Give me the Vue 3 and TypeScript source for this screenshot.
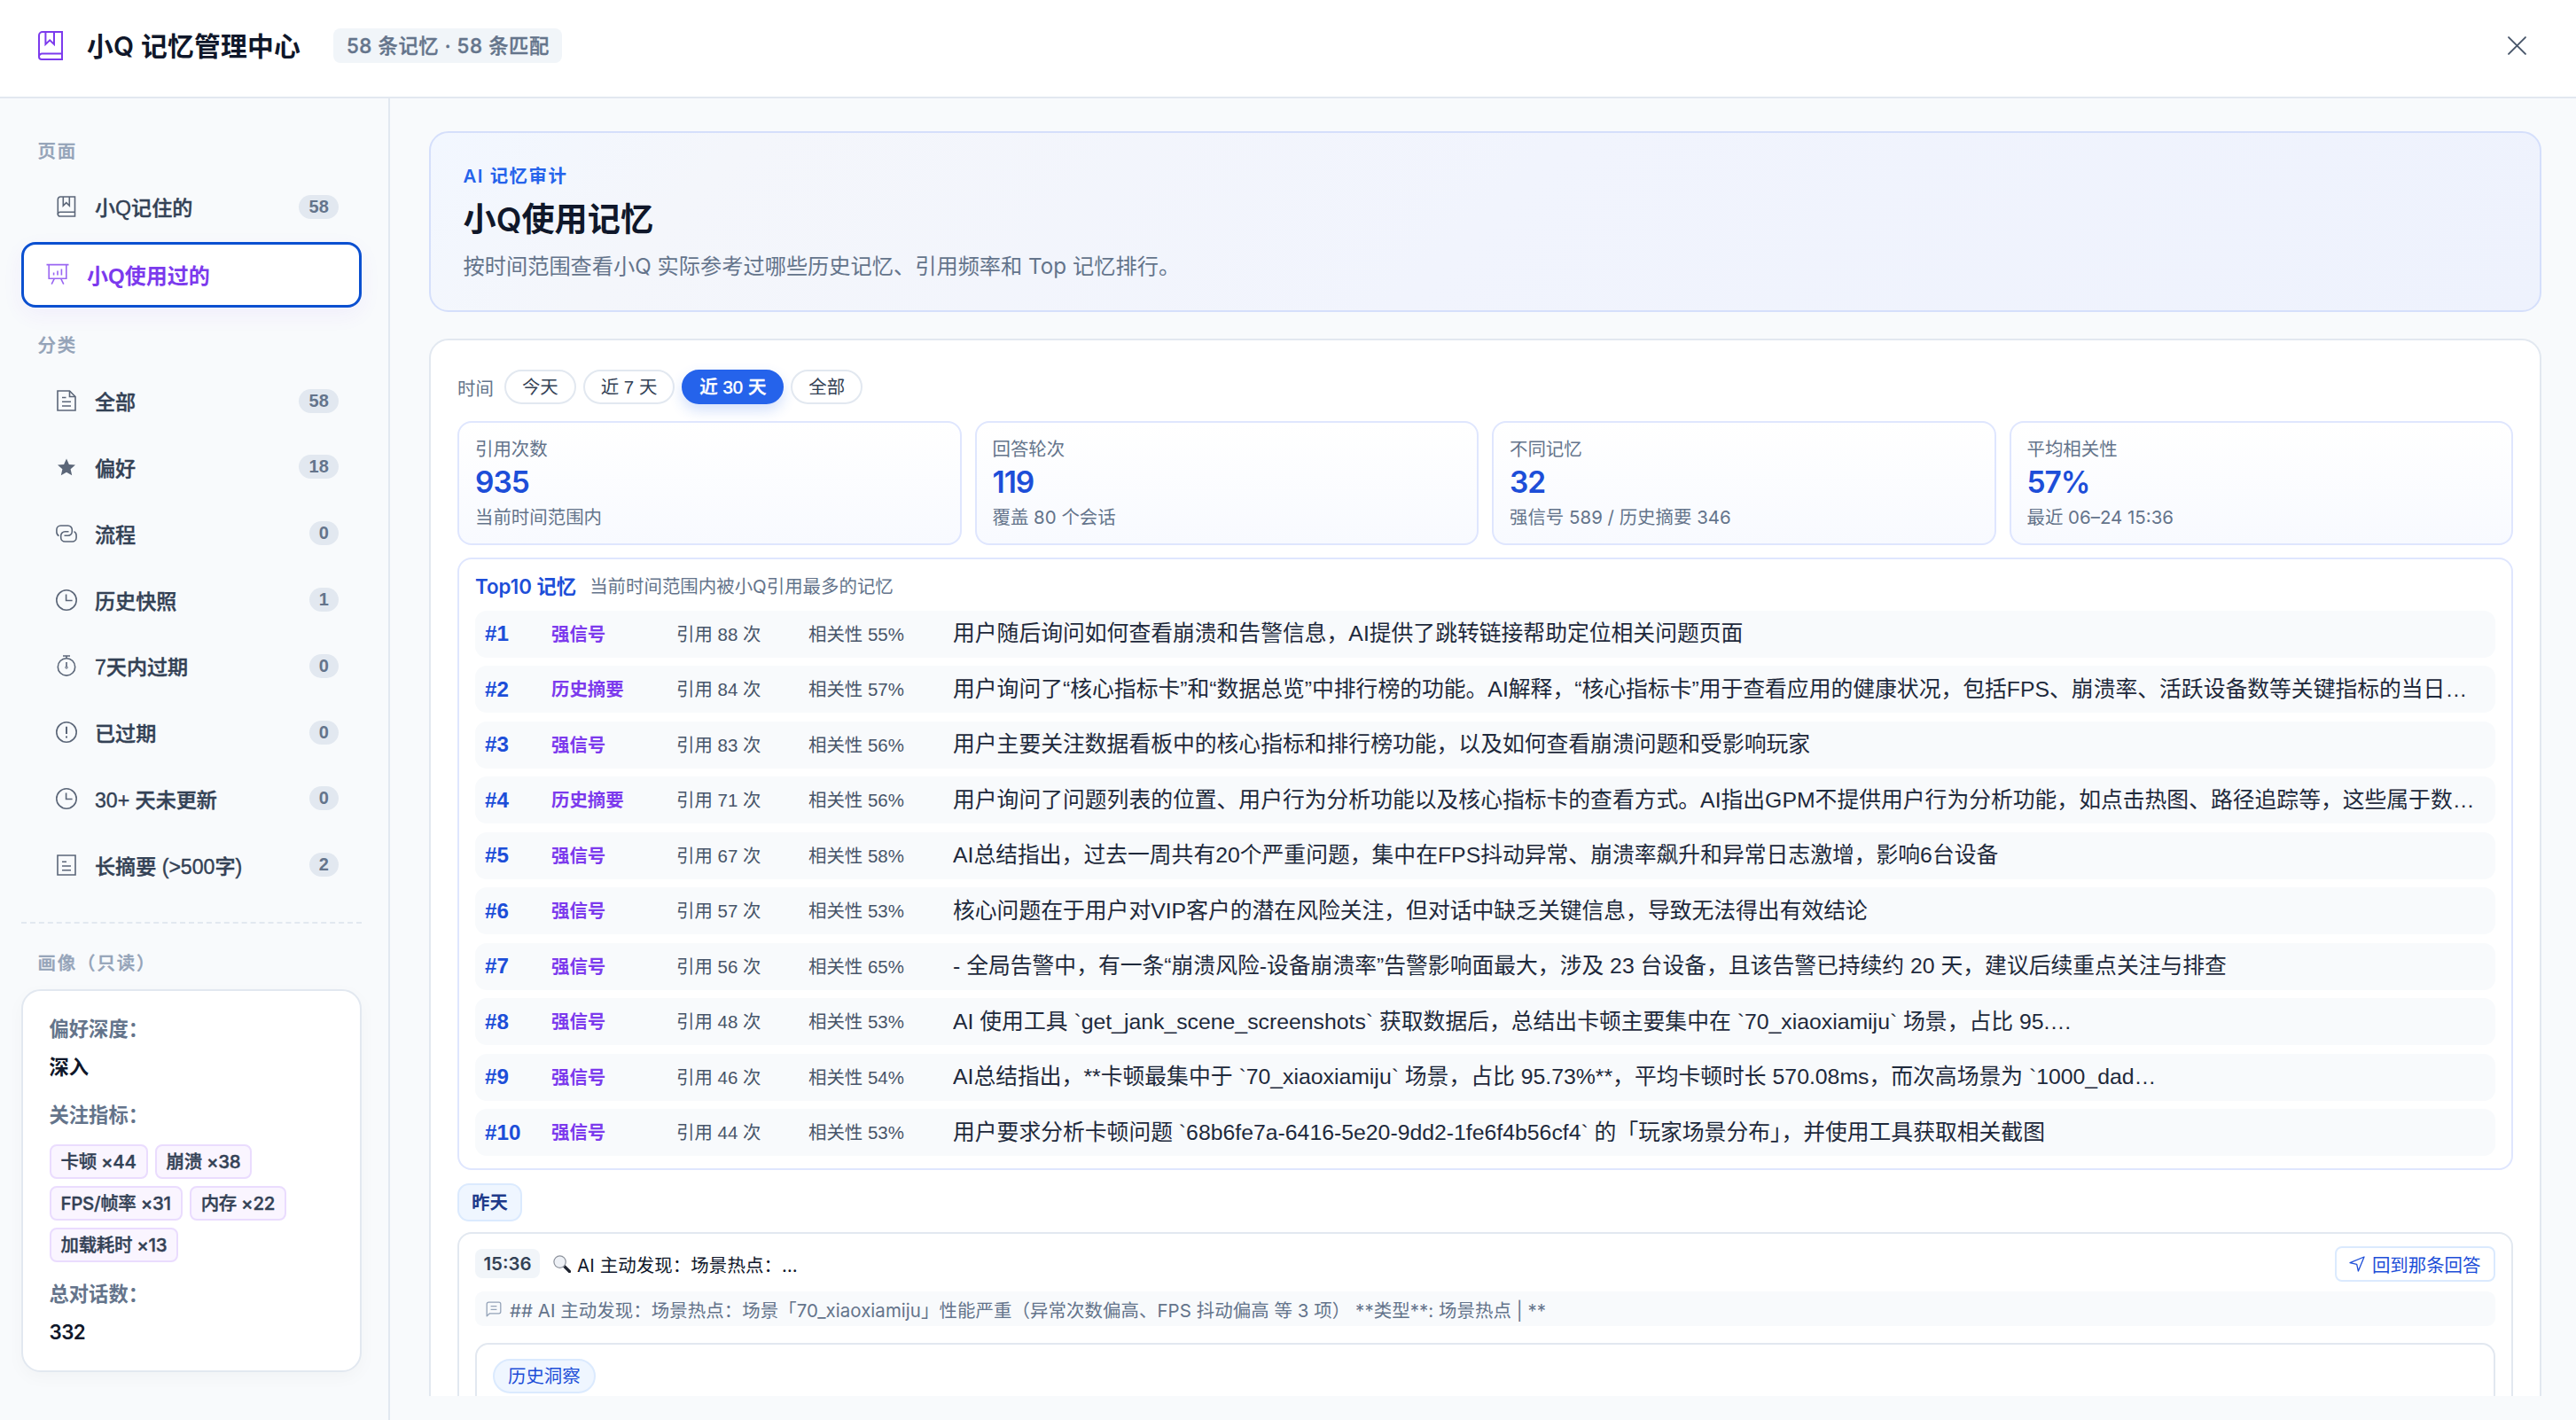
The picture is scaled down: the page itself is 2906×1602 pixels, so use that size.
<script setup lang="ts">
interface NavItem {
  icon: string
  label: string
  count: number
}

interface Stat {
  label: string
  value: string
  note: string
}

interface RankRow {
  kind: string
  cites: number
  relevance: number
  text: string
}

const categories: NavItem[] = [
  { icon: 'doc', label: '全部', count: 58 },
  { icon: 'star', label: '偏好', count: 18 },
  { icon: 'link', label: '流程', count: 0 },
  { icon: 'clock', label: '历史快照', count: 1 },
  { icon: 'timer', label: '7天内过期', count: 0 },
  { icon: 'alert', label: '已过期', count: 0 },
  { icon: 'clock', label: '30+ 天未更新', count: 0 },
  { icon: 'note', label: '长摘要 (>500字)', count: 2 },
]

const tags: string[] = ['卡顿 ×44', '崩溃 ×38', 'FPS/帧率 ×31', '内存 ×22', '加载耗时 ×13']

const ranges: string[] = ['今天', '近 7 天', '近 30 天', '全部']
const activeRange = '近 30 天'

const stats: Stat[] = [
  { label: '引用次数', value: '935', note: '当前时间范围内' },
  { label: '回答轮次', value: '119', note: '覆盖 80 个会话' },
  { label: '不同记忆', value: '32', note: '强信号 589 / 历史摘要 346' },
  { label: '平均相关性', value: '57%', note: '最近 06–24 15:36' },
]

const rows: RankRow[] = [
  { kind: '强信号', cites: 88, relevance: 55, text: '用户随后询问如何查看崩溃和告警信息，AI提供了跳转链接帮助定位相关问题页面' },
  { kind: '历史摘要', cites: 84, relevance: 57, text: '用户询问了“核心指标卡”和“数据总览”中排行榜的功能。AI解释，“核心指标卡”用于查看应用的健康状况，包括FPS、崩溃率、活跃设备数等关键指标的当日…' },
  { kind: '强信号', cites: 83, relevance: 56, text: '用户主要关注数据看板中的核心指标和排行榜功能，以及如何查看崩溃问题和受影响玩家' },
  { kind: '历史摘要', cites: 71, relevance: 56, text: '用户询问了问题列表的位置、用户行为分析功能以及核心指标卡的查看方式。AI指出GPM不提供用户行为分析功能，如点击热图、路径追踪等，这些属于数…' },
  { kind: '强信号', cites: 67, relevance: 58, text: 'AI总结指出，过去一周共有20个严重问题，集中在FPS抖动异常、崩溃率飙升和异常日志激增，影响6台设备' },
  { kind: '强信号', cites: 57, relevance: 53, text: '核心问题在于用户对VIP客户的潜在风险关注，但对话中缺乏关键信息，导致无法得出有效结论' },
  { kind: '强信号', cites: 56, relevance: 65, text: '- 全局告警中，有一条“崩溃风险-设备崩溃率”告警影响面最大，涉及 23 台设备，且该告警已持续约 20 天，建议后续重点关注与排查' },
  { kind: '强信号', cites: 48, relevance: 53, text: 'AI 使用工具 `get_jank_scene_screenshots` 获取数据后，总结出卡顿主要集中在 `70_xiaoxiamiju` 场景，占比 95.…' },
  { kind: '强信号', cites: 46, relevance: 54, text: 'AI总结指出，**卡顿最集中于 `70_xiaoxiamiju` 场景，占比 95.73%**，平均卡顿时长 570.08ms，而次高场景为 `1000_dad…' },
  { kind: '强信号', cites: 44, relevance: 53, text: '用户要求分析卡顿问题 `68b6fe7a-6416-5e20-9dd2-1fe6f4b56cf4` 的「玩家场景分布」，并使用工具获取相关截图' },
]
</script>

<template>
  <div class="app">
    <header class="topbar">
      <svg class="logo" viewBox="0 0 28 33" fill="none" stroke="#7c3aed" stroke-width="2">
        <path d="M27 1H5a4 4 0 0 0-4 4v24a3 3 0 0 0 3 3h23V1z" />
        <path d="M1 29a3.4 3.4 0 0 1 3.4-3.4H27" />
        <path d="M8.4 1v14l4.8-4.6 4.8 4.6V1" />
      </svg>
      <h1 class="title">小Q 记忆管理中心</h1>
      <span class="summary">58 条记忆 · 58 条匹配</span>
      <button class="close" aria-label="关闭">
        <svg viewBox="0 0 20 20" fill="none" stroke="#475569" stroke-width="1.8" stroke-linecap="round">
          <path d="M1 1l18 18M19 1L1 19" />
        </svg>
      </button>
    </header>

    <div class="body">
      <aside class="sidebar">
        <div class="group">页面</div>
        <button class="nav first">
          <svg class="ico" viewBox="0 0 24 24" fill="none" stroke="currentColor" stroke-width="1.6">
            <path d="M21.5 1H5.2a2.9 2.9 0 0 0-2.9 2.9v16.800a2.300 2.300 0 0 0 2.300 2.300h16.900V1z" />
            <path d="M2.300 20.700a2.400 2.400 0 0 1 2.400-2.400h16.800" />
            <path d="M8.300 1v10l3.500-3.400 3.500 3.400V1" />
          </svg>
          <span class="nav-label">小Q记住的</span>
          <span class="count">58</span>
        </button>
        <button class="nav active">
          <svg class="ico" viewBox="0 0 26 24" fill="none" stroke="currentColor" stroke-width="1.6">
            <path d="M0.500 1.600h25M3.200 1.600v15.600h19.600V1.600M9.400 17.200L6.200 23.600M16.600 17.200l3.200 6.400" />
            <path d="M8.600 10.600v3M13 8.600v5M17.400 6.400v7.200" />
          </svg>
          <span class="nav-label">小Q使用过的</span>
        </button>

        <div class="group second">分类</div>
        <div class="nav-list">
          <button v-for="item in categories" :key="item.label" class="nav">
            <svg class="ico" viewBox="0 0 24 24" fill="none" stroke="currentColor" stroke-width="1.6">
              <template v-if="item.icon === 'doc'">
                <path d="M2 1h13.500L22 7.500V23H2z" />
                <path d="M15.500 1v6.500H22M7 8.500h4.500M7 13.300h10M7 18h10" />
              </template>
              <path
                v-else-if="item.icon === 'star'"
                fill="currentColor"
                stroke="none"
                d="M12 2.400l2.900 6.500 7.100.7-5.400 4.700 1.600 7L12 17.700l-6.200 3.600 1.600-7L2 9.600l7.100-.7z"
              />
              <template v-else-if="item.icon === 'link'">
                <path d="M3.500 14.600A5 5 0 0 1 .9 10.200V7.600a4.600 4.600 0 0 1 4.600-4.600h8.200a4.600 4.600 0 0 1 4.600 4.600v2a4.600 4.600 0 0 1-4.600 4.600H9.500" />
                <path d="M20.500 9.600a5 5 0 0 1 2.600 4.400v2.400a4.600 4.600 0 0 1-4.600 4.600h-8.200a4.600 4.600 0 0 1-4.600-4.600v-2a4.600 4.600 0 0 1 4.600-4.600h4.200" />
              </template>
              <template v-else-if="item.icon === 'clock'">
                <circle cx="12" cy="12" r="11.200" />
                <path d="M11.600 5.500v7h7" />
              </template>
              <template v-else-if="item.icon === 'timer'">
                <circle cx="12" cy="13.400" r="9.700" />
                <path d="M8 1h8M12 1v2.700M12 8v5" />
                <circle cx="12" cy="14" r="1.200" stroke-width="1" />
              </template>
              <template v-else-if="item.icon === 'alert'">
                <circle cx="12" cy="12" r="11.200" />
                <path d="M12 5.800v8.200M12 16.400v2" stroke-width="2" />
              </template>
              <template v-else>
                <path d="M2 1h20v22H2z" />
                <path d="M7 8.300h5M7 13h10M7 17.700h10" />
              </template>
            </svg>
            <span class="nav-label">{{ item.label }}</span>
            <span class="count">{{ item.count }}</span>
          </button>
        </div>

        <div class="divider"></div>
        <div class="group third">画像（只读）</div>
        <section class="profile">
          <div class="p-key">偏好深度：</div>
          <div class="p-val">深入</div>
          <div class="p-key k2">关注指标：</div>
          <div class="tags">
            <span v-for="t in tags" :key="t" class="tag">{{ t }}</span>
          </div>
          <div class="p-key k3">总对话数：</div>
          <div class="p-val num">332</div>
        </section>
      </aside>

      <main class="main">
        <section class="hero">
          <div class="eyebrow">AI 记忆审计</div>
          <h2>小Q使用记忆</h2>
          <p>按时间范围查看小Q 实际参考过哪些历史记忆、引用频率和 Top 记忆排行。</p>
        </section>

        <section class="panel">
          <div class="filters">
            <span class="f-label">时间</span>
            <button v-for="r in ranges" :key="r" class="pill" :class="{ on: r === activeRange }">{{ r }}</button>
          </div>

          <div class="stats">
            <div v-for="s in stats" :key="s.label" class="stat">
              <div class="s-label">{{ s.label }}</div>
              <div class="s-value">{{ s.value }}</div>
              <div class="s-note">{{ s.note }}</div>
            </div>
          </div>

          <div class="top">
            <div class="top-head">
              <strong>Top10 记忆</strong>
              <span>当前时间范围内被小Q引用最多的记忆</span>
            </div>
            <button v-for="(row, i) in rows" :key="i" class="rank">
              <span class="r-no">#{{ i + 1 }}</span>
              <span class="r-kind">{{ row.kind }}</span>
              <span class="r-meta">引用 {{ row.cites }} 次</span>
              <span class="r-meta">相关性 {{ row.relevance }}%</span>
              <span class="r-text">{{ row.text }}</span>
            </button>
          </div>

          <div class="day">昨天</div>

          <article class="record">
            <div class="rec-head">
              <span class="time">15:36</span>
              <svg class="lens" viewBox="0 0 20 20" fill="none">
                <path d="M12.500 12.500l6 6" stroke="#1f2430" stroke-width="3.200" stroke-linecap="round" />
                <circle cx="7.600" cy="7.600" r="6.700" fill="#eef1f6" stroke="#8d929c" stroke-width="1.200" />
              </svg>
              <span class="rec-title">AI 主动发现：场景热点：…</span>
              <button class="goto">
                <svg viewBox="0 0 18 18" fill="none" stroke="currentColor" stroke-width="1.300" stroke-linejoin="round">
                  <path d="M1 7.600L17 1l-6.600 16-1.700-7.700z" />
                </svg>
                <span>回到那条回答</span>
              </button>
            </div>
            <div class="quote">
              <svg viewBox="0 0 18 18" fill="none" stroke="#94a3b8" stroke-width="1.300" stroke-linejoin="round">
                <path d="M1.200 16.800V3.200a2 2 0 0 1 2-2h11.600a2 2 0 0 1 2 2v8.600a2 2 0 0 1-2 2H4.400z" />
                <path d="M5.600 5.600h6.800M5.600 9.400h6.800" />
              </svg>
              <span>## AI 主动发现：场景热点：场景「70_xiaoxiamiju」性能严重（异常次数偏高、FPS 抖动偏高 等 3 项） **类型**: 场景热点 | **</span>
            </div>
            <div class="insight">
              <span class="insight-chip">历史洞察</span>
            </div>
          </article>
        </section>
      </main>
    </div>
  </div>
</template>

<style>
html,
body {
  margin: 0;
  background: #f8fafc;
}
</style>

<style scoped>
.app {
  width: 2906px;
  height: 1602px;
  overflow: hidden;
  display: flex;
  flex-direction: column;
  background: #f8fafc;
  font-family: Inter, 'Noto Sans CJK SC', sans-serif;
  font-size: 20.46px;
  color: #0f172a;
}
.app *,
.app {
  box-sizing: border-box;
}
button {
  font-family: 'Liberation Sans', 'Noto Sans CJK SC', sans-serif;
  border: 0;
  background: none;
  margin: 0;
  padding: 0;
  color: inherit;
  text-align: left;
  white-space: nowrap;
}
svg {
  flex: none;
  display: block;
}

/* header */
.topbar {
  flex: none;
  height: 111px;
  padding: 0 56px 6px 43px;
  display: flex;
  align-items: center;
  background: #fff;
  border-bottom: 2px solid #e2e8f0;
}
.logo {
  width: 28px;
  height: 33px;
}
.title {
  margin: 0 0 0 27px;
  font-size: 29.8px;
  line-height: 40px;
  letter-spacing: 0.2px;
  font-weight: 600;
  white-space: nowrap;
}
.summary {
  margin-left: 37px;
  height: 39px;
  padding: 0 14px 0 15px;
  border-radius: 8px;
  background: #f1f5f9;
  color: #64748b;
  font-size: 22.3px;
  letter-spacing: 0.6px;
  line-height: 39px;
  font-weight: 500;
  -webkit-text-stroke: 0.4px currentColor;
  white-space: nowrap;
}
.close {
  margin-left: auto;
}
.close svg {
  width: 21px;
  height: 21px;
}

.body {
  flex: 1;
  min-height: 0;
  display: flex;
}

/* sidebar */
.sidebar {
  flex: none;
  width: 440px;
  padding: 45px 30px 0 24px;
  border-right: 2px solid #e2e8f0;
}
.group {
  height: 30px;
  padding-left: 18.500px;
  line-height: 30px;
  font-size: 20.46px;
  letter-spacing: 1.860px;
  font-weight: 500;
  -webkit-text-stroke: 0.4px currentColor;
  color: #94a3b8;
}
.group.second {
  margin-top: 28px;
}
.nav {
  width: 100%;
  height: 70.8px;
  padding: 0 26px 0 39px;
  display: flex;
  align-items: center;
  font-size: 23.1px;
  font-weight: 500;
  color: #334155;
}
.nav .ico {
  width: 24px;
  height: 24px;
  color: #5b6678;
}
.nav .nav-label {
  margin-left: 20px;
  -webkit-text-stroke: 0.4px currentColor;
}
.nav.first {
  margin-top: 12px;
}
.nav.active {
  height: 74px;
  margin-top: 4px;
  padding: 0 26px 1px 25px;
  border: 3px solid #0b50d0;
  border-radius: 16px;
  background: #fff;
  box-shadow: 0 8px 24px rgba(124, 58, 237, 0.06);
  color: #7c3aed;
  font-size: 24px;
  font-weight: 600;
}
.nav.active .ico {
  width: 26px;
  color: #9a66f2;
}
.nav.active .nav-label {
  margin-left: 20px;
  -webkit-text-stroke: 0;
}
.count {
  margin-left: auto;
  height: 27px;
  padding: 0 11.200px;
  border-radius: 14px;
  background: #e2e8f0;
  color: #64748b;
  font-size: 20px;
  line-height: 27px;
  font-weight: 700;
}
.nav-list {
  margin-top: 12px;
  display: flex;
  flex-direction: column;
  gap: 4px;
}
.divider {
  margin-top: 29px;
  border-top: 2px dashed #e2e8f0;
}
.group.third {
  margin-top: 30px;
}
.profile {
  margin-top: 13.500px;
  height: 432px;
  padding: 28px 0 0 29.500px;
  border: 2px solid #e2e8f0;
  border-radius: 22px;
  background: #fff;
  box-shadow: 0 6px 20px rgba(15, 23, 42, 0.03);
}
.p-key,
.p-val {
  height: 30px;
  line-height: 30px;
  font-size: 22.3px;
  font-weight: 600;
}
.p-key {
  color: #64748b;
}
.p-val {
  margin-top: 13px;
  color: #0f172a;
}
.p-val.num {
  letter-spacing: -0.5px;
}
.p-key.k2 {
  margin-top: 24px;
}
.p-key.k3 {
  margin-top: 21px;
}
.tags {
  margin-top: 18px;
  display: flex;
  flex-wrap: wrap;
  gap: 8px;
}
.tag {
  height: 39px;
  padding: 0 11px;
  border: 2px solid #eadcfe;
  border-radius: 8px;
  background: #faf5ff;
  color: #334155;
  font-size: 20.46px;
  letter-spacing: -0.3px;
  line-height: 35px;
  font-weight: 500;
  -webkit-text-stroke: 0.4px currentColor;
  white-space: nowrap;
}

/* main */
.main {
  flex: 1;
  min-width: 0;
  height: 1464px;
  padding: 37px 39px 0 44px;
  overflow: hidden;
}
.hero {
  height: 204px;
  padding: 33.500px 0 0 36.500px;
  border: 2px solid #d5dffb;
  border-radius: 22px;
  background: linear-gradient(135deg, #f2f7ff 0%, #f4f6fb 14%, #f1f4fd 50%, #eef2fd 100%);
}
.eyebrow {
  height: 30px;
  line-height: 30px;
  font-size: 20.46px;
  letter-spacing: 1.500px;
  font-weight: 600;
  color: #2563eb;
}
.hero h2 {
  margin: 10px 0 0;
  height: 48px;
  line-height: 48px;
  font-size: 37.200px;
  font-weight: 600;
}
.hero p {
  margin: 12.500px 0 0;
  height: 34px;
  line-height: 34px;
  font-size: 24.230px;
  color: #64748b;
}
.panel {
  margin-top: 30px;
  height: 1300px;
  padding: 33px 30px 0 30px;
  border: 2px solid #e2e8f0;
  border-radius: 22px;
  background: #fff;
}
.filters {
  display: flex;
  align-items: center;
  gap: 8px;
  height: 39px;
}
.f-label {
  margin-right: 4px;
  color: #64748b;
}
.pill {
  height: 39px;
  padding: 0 18px;
  border: 2px solid #e2e8f0;
  border-radius: 20px;
  background: #fff;
  font-size: 20.46px;
  line-height: 35px;
  color: #334155;
}
.pill.on {
  border-color: #2563eb;
  background: #2563eb;
  color: #fff;
  font-weight: 500;
  -webkit-text-stroke: 0.4px currentColor;
  box-shadow: 0 7px 15px rgba(37, 99, 235, 0.2);
}
.stats {
  margin-top: 19px;
  display: grid;
  grid-template-columns: repeat(4, 1fr);
  gap: 15px;
}
.stat {
  height: 140px;
  padding: 16px 18px 0;
  border: 2px solid #dfe6fe;
  border-radius: 16px;
  background: linear-gradient(180deg, #fff, #f8faff);
}
.s-label,
.s-note {
  height: 28px;
  line-height: 28px;
  color: #64748b;
}
.s-value {
  height: 40px;
  line-height: 40px;
  margin: 3px 0 6px;
  font-size: 33.500px;
  font-weight: 600;
  letter-spacing: -1px;
  color: #1d4ed8;
}
.top {
  margin-top: 14px;
  height: 691px;
  padding: 14px 18px 0;
  border: 2px solid #dfe6fe;
  border-radius: 16px;
}
.top-head {
  display: flex;
  align-items: center;
  height: 30px;
  margin-bottom: 13.500px;
}
.top-head strong {
  font-size: 22.320px;
  font-weight: 600;
  color: #1d4ed8;
}
.top-head span {
  margin-left: 15px;
  color: #64748b;
}
.rank {
  width: 100%;
  height: 53px;
  margin-bottom: 9.500px;
  padding: 0 11px;
  display: grid;
  grid-template-columns: 75px 141px 149px 163px minmax(0, 1fr);
  align-items: center;
  border-radius: 13px;
  background: #f8fafc;
  font-size: 20.46px;
}
.r-no {
  font-size: 24.180px;
  font-weight: 700;
  color: #1d4ed8;
}
.r-kind {
  padding-bottom: 2.500px;
  font-weight: 600;
  color: #7c3aed;
}
.r-meta {
  padding-bottom: 2.500px;
  color: #475569;
}
.r-text {
  overflow: hidden;
  font-size: 24.800px;
  line-height: 40px;
  color: #1e293b;
}
.day {
  width: 73px;
  height: 43px;
  margin-top: 15px;
  border: 2px solid #dbeafe;
  border-radius: 13px;
  background: #eff6ff;
  color: #1e3a8a;
  line-height: 39px;
  font-weight: 600;
  text-align: center;
}
.record {
  margin-top: 12px;
  height: 400px;
  padding: 13px 18px 0;
  border: 2px solid #e2e8f0;
  border-radius: 16px;
}
.rec-head {
  height: 41px;
  display: flex;
  align-items: center;
}
.time {
  width: 73px;
  height: 33px;
  border-radius: 8px;
  background: #f1f5f9;
  color: #334155;
  line-height: 33px;
  font-weight: 600;
  text-align: center;
}
.lens {
  width: 20px;
  height: 20px;
  margin-left: 15px;
}
.rec-title {
  margin-left: 7px;
  letter-spacing: 0.1px;
  white-space: nowrap;
}
.goto {
  margin-left: auto;
  height: 40px;
  padding: 0 14.500px;
  display: flex;
  align-items: center;
  gap: 7.500px;
  border: 2px solid #dbeafe;
  border-radius: 8px;
  color: #1d4ed8;
  font-size: 20.46px;
}
.goto svg {
  width: 18px;
  height: 18px;
}
.quote {
  margin-top: 11px;
  height: 39px;
  padding: 0 12px;
  display: flex;
  align-items: center;
  gap: 9px;
  border-radius: 9px;
  background: #f8fafc;
  color: #64748b;
  letter-spacing: 0.06px;
  white-space: nowrap;
}
.quote svg {
  width: 18px;
  height: 18px;
}
.insight {
  margin-top: 19px;
  height: 260px;
  padding: 16px 18px;
  border: 2px solid #e2e8f0;
  border-radius: 15px;
}
.insight-chip {
  display: inline-block;
  height: 39px;
  padding: 0 15px;
  border: 2px solid #dbeafe;
  border-radius: 20px;
  background: #eff6ff;
  color: #1d4ed8;
  line-height: 35px;
}
</style>
